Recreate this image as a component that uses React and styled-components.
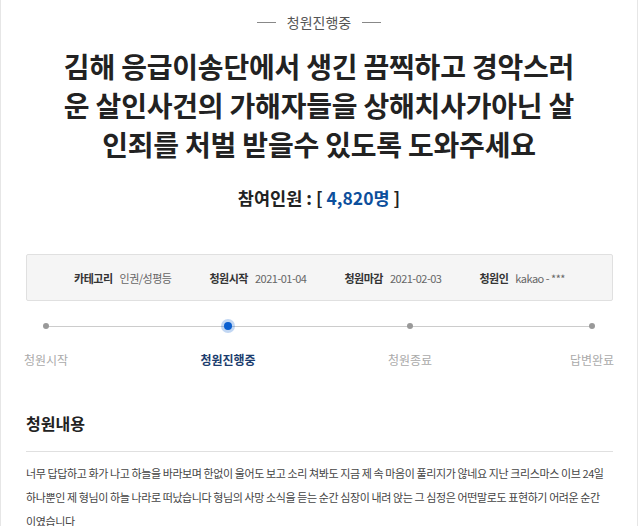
import styled, { createGlobalStyle } from "styled-components";

const GlobalStyle = createGlobalStyle`
  body {
    margin: 0;
    background: #fff;
    font-family: "Noto Sans CJK KR", "Noto Sans", sans-serif;
    color: #333;
  }
`;

const steps = [
  { label: "청원시작" },
  { label: "청원진행중", active: true },
  { label: "청원종료" },
  { label: "답변완료" },
];

const info = [
  { term: "카테고리", value: "인권/성평등" },
  { term: "청원시작", value: "2021-01-04" },
  { term: "청원마감", value: "2021-02-03" },
  { term: "청원인", value: "kakao - ***" },
];

export default function App() {
  return (
    <>
      <GlobalStyle />
      <Page>
        <Status>청원진행중</Status>
        <Title>
          김해 응급이송단에서 생긴 끔찍하고 경악스러
          <br />
          운 살인사건의 가해자들을 상해치사가아닌 살
          <br />
          인죄를 처벌 받을수 있도록 도와주세요
        </Title>
        <Count>
          참여인원 : [ <CountNum>4,820명</CountNum> ]
        </Count>
        <InfoBox>
          {info.map((item) => (
            <InfoItem key={item.term}>
              <InfoTerm>{item.term}</InfoTerm>
              <InfoValue>{item.value}</InfoValue>
            </InfoItem>
          ))}
        </InfoBox>
        <Progress>
          <Track />
          {steps.map((step) => (
            <Step key={step.label}>
              <Dot $active={step.active} />
              <StepLabel $active={step.active}>{step.label}</StepLabel>
            </Step>
          ))}
        </Progress>
        <Section>
          <SectionTitle>청원내용</SectionTitle>
          <Body>
            너무 답답하고 화가 나고 하늘을 바라보며 한없이 울어도 보고 소리 쳐봐도 지금 제 속 마음이 풀리지가 않네요 지난 크리스마스 이브 24일
            <br />
            하나뿐인 제 형님이 하늘 나라로 떠났습니다 형님의 사망 소식을 듣는 순간 심장이 내려 앉는 그 심정은 어떤말로도 표현하기 어려운 순간
            <br />
            이였습니다
          </Body>
        </Section>
      </Page>
    </>
  );
}

const Page = styled.div`
  width: 636px;
  min-height: 526px;
  border-left: 1px solid #e6e6e6;
  border-right: 1px solid #e6e6e6;
`;

const Status = styled.div`
  display: flex;
  justify-content: center;
  align-items: center;
  gap: 11px;
  padding-top: 12px;
  font-size: 14px;
  line-height: 20px;
  color: #555;
  &::before,
  &::after {
    content: "";
    width: 19px;
    height: 1px;
    background: #888;
  }
`;

const Title = styled.h1`
  margin: 15px 0 0;
  text-align: center;
  font-size: 28px;
  line-height: 39px;
  font-weight: 700;
  color: #222;
  letter-spacing: -0.2px;
`;

const Count = styled.div`
  margin-top: 22px;
  text-align: center;
  font-size: 17.5px;
  line-height: 24px;
  font-weight: 700;
  color: #222;
`;

const CountNum = styled.span`
  color: #0d4f9c;
`;

const InfoBox = styled.div`
  margin: 44px 24px 0 25px;
  height: 45px;
  display: flex;
  align-items: center;
  justify-content: center;
  gap: 38px;
  background: #f5f5f5;
  border: 1px solid #e0e0e0;
  border-radius: 2px;
  font-size: 11px;
  letter-spacing: -0.5px;
`;

const InfoItem = styled.div`
  display: flex;
  gap: 7px;
`;

const InfoTerm = styled.span`
  font-weight: 700;
  color: #333;
`;

const InfoValue = styled.span`
  color: #666;
`;

const Progress = styled.div`
  position: relative;
  margin: 19px 22px 0;
  display: flex;
  justify-content: space-between;
`;

const Track = styled.div`
  position: absolute;
  left: 22px;
  right: 22px;
  top: 6px;
  height: 1px;
  background: #ccc;
`;

const Step = styled.div`
  position: relative;
  width: 46px;
  display: flex;
  flex-direction: column;
  align-items: center;
`;

const Dot = styled.span`
  width: ${(p) => (p.$active ? "8px" : "6px")};
  height: ${(p) => (p.$active ? "8px" : "6px")};
  margin-top: ${(p) => (p.$active ? "2px" : "3px")};
  border-radius: 50%;
  background: ${(p) => (p.$active ? "#0a5fd0" : "#999")};
  box-shadow: ${(p) => (p.$active ? "0 0 0 3px rgba(10,95,208,0.25)" : "none")};
`;

const StepLabel = styled.span`
  margin-top: ${(p) => (p.$active ? "21px" : "22px")};
  font-size: 12px;
  white-space: nowrap;
  font-weight: ${(p) => (p.$active ? 700 : 400)};
  color: ${(p) => (p.$active ? "#1c3d6e" : "#aaa")};
`;

const Section = styled.div`
  margin: 43px 24px 0 25px;
`;

const SectionTitle = styled.h2`
  margin: 0;
  padding-bottom: 16px;
  border-bottom: 1px solid #e0e0e0;
  font-size: 16px;
  line-height: 24px;
  font-weight: 700;
  color: #222;
`;

const Body = styled.p`
  margin: 9px 0 0;
  font-size: 11px;
  line-height: 24px;
  color: #444;
  letter-spacing: -0.4px;
  white-space: nowrap;
`;
